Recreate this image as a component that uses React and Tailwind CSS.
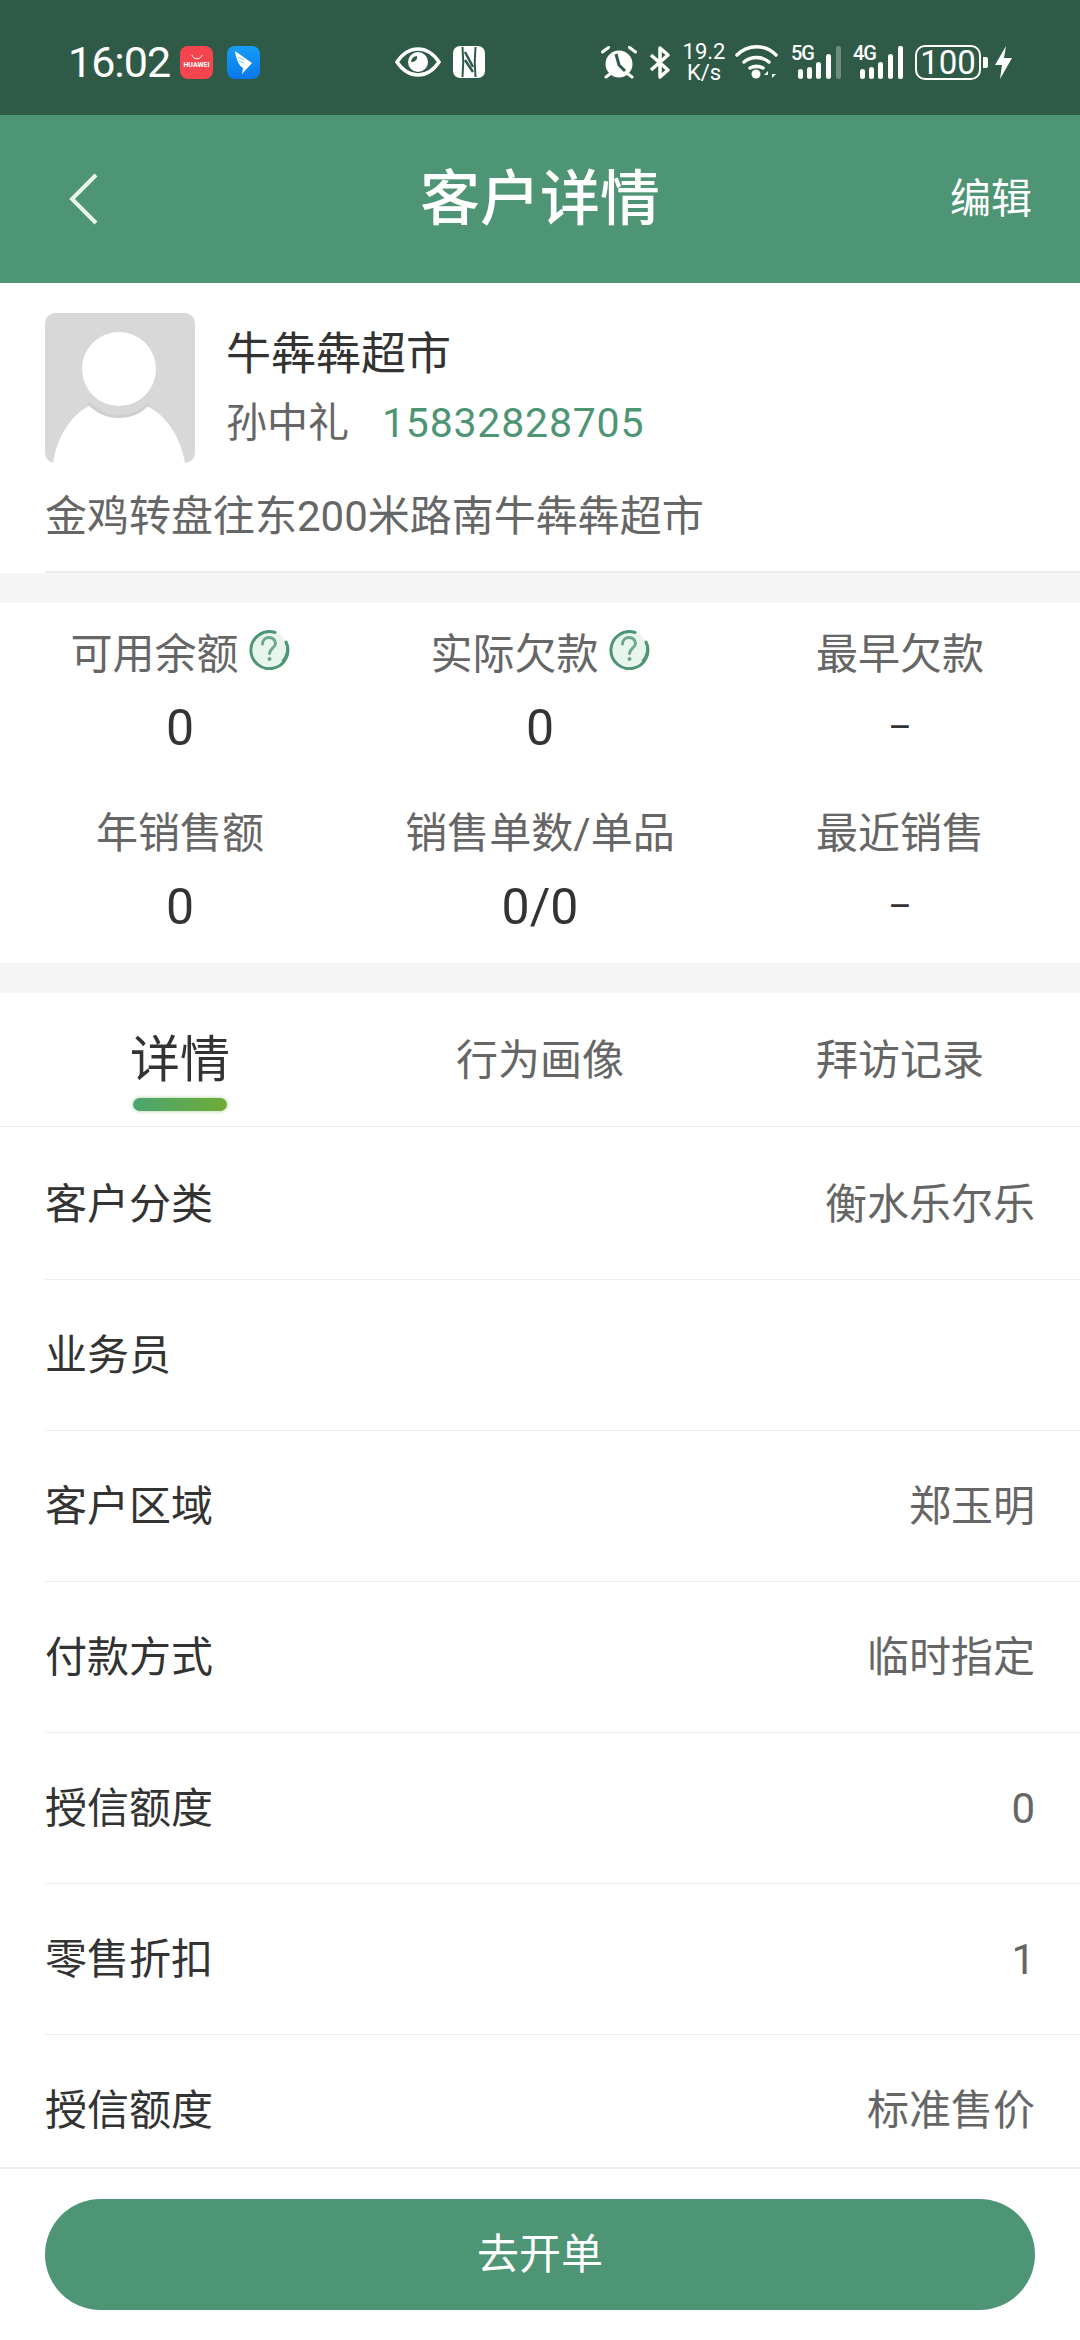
import React from 'react';

const rows = [
  ['客户分类', '衡水乐尔乐'],
  ['业务员', ''],
  ['客户区域', '郑玉明'],
  ['付款方式', '临时指定'],
  ['授信额度', '0'],
  ['零售折扣', '1'],
  ['授信额度', '标准售价'],
];

const HelpIcon = () => (
  <svg width="42" height="42" viewBox="0 0 42 42" className="ml-[9px] mt-[-13px] shrink-0">
    <circle cx="21" cy="21" r="18" fill="#e8f4ee" />
    <path d="M27 4.500A18.500 18.500 0 1 0 38 14" fill="none" stroke="#4e9575" strokeWidth="3" strokeLinecap="round" />
    <path d="M39.500 19a18.500 18.500 0 0 1-5 14.500" fill="none" stroke="#4e9575" strokeWidth="3" />
    <path d="M14.500 16c0-4 3-6.500 6.500-6.500s6.500 2.500 6.500 6c0 4.500-6 5-6 10" fill="none" stroke="#6da88a" strokeWidth="3" strokeLinecap="round" />
    <circle cx="21.500" cy="31" r="2" fill="#6da88a" />
  </svg>
);

const Stat = ({ label, value, help }) => (
  <div className="flex flex-col items-center h-[179px]">
    <div className="flex items-center text-[42px] leading-[56px] text-[#666666]">
      {label}
      {help && <HelpIcon />}
    </div>
    <div className={value === '–' ? 'text-[36px] leading-[62px] mt-[14px] text-[#333333]' : 'text-[50px] leading-[62px] mt-[14px] text-[#333333]'}>{value}</div>
  </div>
);

const Bars = ({ tag, dim }) => (
  <div className="relative w-[50px] h-[33px]">
    <span className="absolute left-0 top-[-3px] text-[20px] leading-[20px] font-medium text-white tracking-[-1px]">{tag}</span>
    <svg width="50" height="33" viewBox="0 0 50 33" className="absolute left-0 top-0">
      <g fill="#fff">
        <rect x="7" y="23" width="5" height="10" rx="2.500" />
        <rect x="16" y="21" width="5" height="12" rx="2.500" />
        <rect x="25" y="16" width="5" height="17" rx="2.500" />
        <rect x="35" y="8" width="5" height="25" rx="2.500" />
        <rect x="45" y="0" width="5" height="33" rx="2" opacity={dim ? 0.3 : 1} />
      </g>
    </svg>
  </div>
);

const StatusBar = () => (
  <div className="h-[115px] shrink-0 bg-[#2f5a47] flex items-center pl-[68px] pt-[9px] text-white">
    <span className="text-[43px] leading-none w-[112px] tracking-[-1px]">16:02</span>
    <div className="w-[33px] h-[33px] rounded-[8px] bg-[#f4444e] flex flex-col items-center justify-center">
      <svg width="14" height="7" viewBox="0 0 14 7"><path d="M2 1c1 5 9 5 10 0" fill="none" stroke="#fff" strokeWidth="1" /></svg>
      <span className="text-[7px] leading-[9px] font-bold">HUAWEI</span>
    </div>
    <div className="ml-[14px] w-[33px] h-[33px] rounded-[8px] bg-gradient-to-b from-[#169df8] to-[#0a78ea] flex items-center justify-center">
      <svg width="33" height="33" viewBox="0 0 33 33">
        <path d="M8 5l17 12-10 11 1-6C12 20 9 13 8 5z" fill="#fff" />
        <path d="M11 11l6 3M12 15l5 2" stroke="#7cc4fa" strokeWidth="1" />
      </svg>
    </div>
    <svg width="46" height="30" viewBox="0 0 46 30" className="ml-[135px]">
      <path d="M2 15C8 6 15 2 23 2s15 4 21 13c-6 9-13 13-21 13S8 24 2 15z" fill="none" stroke="#fff" strokeWidth="3.500" />
      <circle cx="23" cy="15" r="10" fill="#fff" />
      <path d="M22 9a6 6 0 0 0-6 6c3 0 7-2 6-6z" fill="#2f5a47" />
    </svg>
    <svg width="32" height="32" viewBox="0 0 32 32" className="ml-[12px]">
      <rect x="0" y="0" width="32" height="32" rx="7" fill="#fff" />
      <path d="M9.500 1c1 10 1 20 0 30M22.500 1c-1 10-1 20 0 30" stroke="#2f5a47" strokeWidth="2" fill="none" />
      <path d="M12 6l8 15M12 14l8 12" stroke="#2f5a47" strokeWidth="2.500" fill="none" />
    </svg>
    <svg width="36" height="33" viewBox="0 0 36 33" className="ml-[116px]">
      <circle cx="18" cy="18" r="13.500" fill="#fff" />
      <path d="M15 8l3 11 6 6" stroke="#2f5a47" strokeWidth="3" fill="none" />
      <path d="M1.500 6l6-4.500M34.500 6l-6-4.500M5 31l4-3M31 31l-4-3" stroke="#fff" strokeWidth="3" strokeLinecap="round" />
    </svg>
    <svg width="22" height="33" viewBox="0 0 22 33" className="ml-[12px]">
      <path d="M2 9l17 15-8 7V2l8 7L2 24" fill="none" stroke="#fff" strokeWidth="3.500" strokeLinejoin="round" />
    </svg>
    <div className="ml-[12px] w-[42px] flex flex-col items-center text-[22px] leading-[21px]">
      <span>19.2</span>
      <span>K/s</span>
    </div>
    <svg width="43" height="34" viewBox="0 0 43 34" className="ml-[10px]">
      <path d="M2 10c11-11 28-11 39 0M9 17c7-6 18-6 25 0M15 23c4-2 9-2 13 0" fill="none" stroke="#fff" strokeWidth="3.500" strokeLinecap="round" />
      <circle cx="21" cy="29" r="4.500" fill="#fff" />
      <path d="M33 33v-7l-4 4h4zM37 26v7l4-4h-4z" fill="#fff" />
    </svg>
    <div className="ml-[13px]"><Bars tag="5G" dim /></div>
    <div className="ml-[12px]"><Bars tag="4G" /></div>
    <div className="ml-[12px] w-[66px] h-[35px] rounded-[10px] border-[2.500px] border-white flex items-center justify-center text-[33px] leading-none">100</div>
    <div className="ml-[2px] w-[5px] h-[11px] rounded-r-[2px] bg-white" />
    <svg width="17" height="33" viewBox="0 0 17 33" className="ml-[7px]">
      <path d="M11 0L0 19h7L5 33 17 12H9z" fill="#fff" />
    </svg>
  </div>
);

const CustomerCard = () => (
  <div className="h-[290px] shrink-0 bg-white pl-[45px]">
    <div className="h-full border-b-2 border-[#eeeeee]">
      <div className="flex pt-[30px]">
        <div className="w-[150px] h-[150px] rounded-[10px] overflow-hidden bg-[#d8d8d8]">
          <svg width="150" height="150" viewBox="0 0 150 150">
            <path d="M8 150C12 125 25 103 44 93Q73 116 102 93C122 103 136 125 140 150z" fill="#fff" />
            <circle cx="74" cy="56" r="37" fill="#fff" />
            <path d="M44 90a40 40 0 0 0 60 0" fill="none" stroke="#cfcfcf" strokeWidth="3" />
          </svg>
        </div>
        <div className="ml-[31px] pt-[12px]">
          <div className="text-[45px] leading-[60px] text-[#333333]">牛犇犇超市</div>
          <div className="flex items-center mt-[8px] text-[41px] leading-[60px]">
            <span className="text-[#666666]">孙中礼</span>
            <span className="ml-[33px] text-[#4e9575] tracking-[0.8px]">15832828705</span>
          </div>
        </div>
      </div>
      <div className="mt-[23px] text-[42px] leading-[62px] text-[#666666]">金鸡转盘往东200米路南牛犇犇超市</div>
    </div>
  </div>
);

const App = () => (
  <div className="w-[1080px] h-[2340px] flex flex-col overflow-hidden bg-white font-['Roboto','Noto_Sans_CJK_SC',sans-serif]">
    <StatusBar />
    <div className="h-[168px] shrink-0 bg-[#4e9575] grid grid-cols-[1fr_auto_1fr] items-center px-[48px] text-white">
      <svg width="32" height="54" viewBox="0 0 32 54" className="ml-[20px]">
        <path d="M28 3L4 27l24 24" fill="none" stroke="#eaf5ef" strokeWidth="4" />
      </svg>
      <span className="text-[60px] leading-none font-medium mt-[2px]">客户详情</span>
      <span className="text-[41px] leading-none justify-self-end">编辑</span>
    </div>
    <CustomerCard />
    <div className="h-[30px] shrink-0 bg-[#f5f5f5]" />
    <div className="h-[360px] shrink-0 bg-white grid grid-cols-3 content-start pt-[24px]">
      <Stat label="可用余额" value="0" help />
      <Stat label="实际欠款" value="0" help />
      <Stat label="最早欠款" value="–" />
      <Stat label="年销售额" value="0" />
      <Stat label="销售单数/单品" value="0/0" />
      <Stat label="最近销售" value="–" />
    </div>
    <div className="h-[30px] shrink-0 bg-[#f5f5f5]" />
    <div className="h-[134px] shrink-0 grid grid-cols-3 border-b border-[#eeeeee]">
      <div className="flex flex-col items-center pt-[36px]">
        <span className="text-[50px] leading-[62px] text-[#333333]">详情</span>
        <div className="mt-[7px] w-[94px] h-[13px] rounded-full bg-gradient-to-r from-[#4aa56f] to-[#6fab33] shadow-[0_0_4px_#a8d49a] blur-[0.5px]" />
      </div>
      <div className="flex justify-center pt-[38px] text-[42px] leading-[60px] text-[#666666]">行为画像</div>
      <div className="flex justify-center pt-[38px] text-[42px] leading-[60px] text-[#666666]">拜访记录</div>
    </div>
    <div className="flex-1 overflow-hidden pt-[2px]">
      {rows.map(([label, value], i) => (
        <div key={i} className="ml-[45px] pr-[45px] h-[151px] flex items-center justify-between border-b border-[#eeeeee] last:border-b-0">
          <span className="text-[42px] text-[#333333]">{label}</span>
          <span className="text-[42px] text-[#666666]">{value}</span>
        </div>
      ))}
    </div>
    <div className="h-[173px] shrink-0 bg-white border-t-2 border-[#eeeeee] px-[45px] pt-[30px]">
      <button className="w-full h-[111px] rounded-full bg-[#4e9575] text-white text-[42px]">去开单</button>
    </div>
  </div>
);

export default App;
